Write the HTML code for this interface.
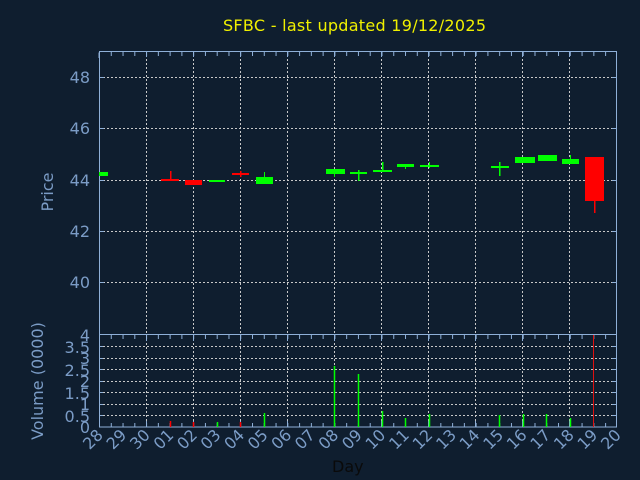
<!DOCTYPE html>
<html><head><meta charset="utf-8"><style>
html,body{margin:0;padding:0;background:#0f1e2f;}
svg{display:block}
text{font-family:"DejaVu Sans","Liberation Sans",sans-serif;}
</style></head><body>
<svg width="640" height="480" viewBox="0 0 640 480" xmlns="http://www.w3.org/2000/svg">
<rect width="640" height="480" fill="#0f1e2f"/>
<text x="223" y="31" font-size="16" fill="#f0f000" textLength="263">SFBC - last updated 19/12/2025</text>
<!-- grid -->
<g stroke="#c8c8c8" stroke-width="1" stroke-dasharray="2 2" fill="none">
<path d="M99 77.5H617M99 128.5H617M99 180.5H617M99 231.5H617M99 282.5H617"/>
<path d="M99 346.5H617M99 358.5H617M99 369.5H617M99 381.5H617M99 392.5H617M99 404.5H617M99 415.5H617"/>
<path d="M146.5 51V427M193.5 51V427M240.5 51V427M287.5 51V427M334.5 51V427M381.5 51V427M428.5 51V427M475.5 51V427M522.5 51V427M569.5 51V427"/>
</g>
<!-- axes -->
<g stroke="#8fb0d8" stroke-width="1" fill="none">
<rect x="99.5" y="51.5" width="517" height="375.5"/>
<path d="M99 334.5H617"/>
<path d="M99.5 52V55" stroke-dasharray="1 10.75"/>
<path d="M99 52.5V58M146.5 52V57M193.5 52V57M240.5 52V57M287.5 52V57M334.5 52V57M381.5 52V57M428.5 52V57M475.5 52V57M522.5 52V57M569.5 52V57"/>
<path d="M99 54H617" stroke-width="4" stroke-dasharray="1 10.77"/>
<path d="M99 337H617" stroke-width="4" stroke-dasharray="1 10.77"/>
<path d="M99 425H617" stroke-width="4" stroke-dasharray="1 10.77"/>
<path d="M146.5 335V341M193.5 335V341M240.5 335V341M287.5 335V341M334.5 335V341M381.5 335V341M428.5 335V341M475.5 335V341M522.5 335V341M569.5 335V341"/>
<path d="M146.5 421V427M193.5 421V427M240.5 421V427M287.5 421V427M334.5 421V427M381.5 421V427M428.5 421V427M475.5 421V427M522.5 421V427M569.5 421V427"/>
<path d="M99 77.5H104M99 128.5H104M99 180.5H104M99 231.5H104M99 282.5H104M612 77.5H617M612 128.5H617M612 180.5H617M612 231.5H617M612 282.5H617"/>
<path d="M612 346.5H617M612 358.5H617M612 369.5H617M612 381.5H617M612 392.5H617M612 404.5H617M612 415.5H617M99 346.5H103M99 358.5H103M99 369.5H103M99 381.5H103M99 392.5H103M99 404.5H103M99 415.5H103"/>
</g>
<!-- y labels -->
<g font-size="16" fill="#7b9cc6" text-anchor="end">
<text x="90" y="83">48</text><text x="90" y="134">46</text><text x="90" y="186">44</text><text x="90" y="237">42</text><text x="90" y="288">40</text>
<text x="90" y="341">4</text><text x="90" y="353">3.5</text><text x="90" y="364">3</text><text x="90" y="376">2.5</text><text x="90" y="387">2</text><text x="90" y="399">1.5</text><text x="90" y="410">1</text><text x="90" y="422">0.5</text><text x="90" y="433">0</text>
</g>
<text transform="translate(53,192) rotate(-90)" text-anchor="middle" font-size="16" fill="#7b9cc6">Price</text>
<text transform="translate(43,381) rotate(-90)" text-anchor="middle" font-size="16" fill="#7b9cc6">Volume (0000)</text>
<text x="332" y="472" font-size="16" fill="#0a0a0a">Day</text>
<!-- x labels -->
<g font-size="16" fill="#7b9cc6" text-anchor="end">
<text transform="translate(104,436) rotate(-45)">28</text>
<text transform="translate(127.5,436) rotate(-45)">29</text>
<text transform="translate(151,436) rotate(-45)">30</text>
<text transform="translate(174.6,436) rotate(-45)">01</text>
<text transform="translate(198.2,436) rotate(-45)">02</text>
<text transform="translate(221.7,436) rotate(-45)">03</text>
<text transform="translate(245.3,436) rotate(-45)">04</text>
<text transform="translate(268.8,436) rotate(-45)">05</text>
<text transform="translate(292.4,436) rotate(-45)">06</text>
<text transform="translate(315.9,436) rotate(-45)">07</text>
<text transform="translate(339.5,436) rotate(-45)">08</text>
<text transform="translate(363,436) rotate(-45)">09</text>
<text transform="translate(386.5,436) rotate(-45)">10</text>
<text transform="translate(410.1,436) rotate(-45)">11</text>
<text transform="translate(433.6,436) rotate(-45)">12</text>
<text transform="translate(457.2,436) rotate(-45)">13</text>
<text transform="translate(480.7,436) rotate(-45)">14</text>
<text transform="translate(504.3,436) rotate(-45)">15</text>
<text transform="translate(527.8,436) rotate(-45)">16</text>
<text transform="translate(551.4,436) rotate(-45)">17</text>
<text transform="translate(574.9,436) rotate(-45)">18</text>
<text transform="translate(598.5,436) rotate(-45)">19</text>
<text transform="translate(622,436) rotate(-45)">20</text>
</g>
<!-- candles -->
<g fill="#00ff00" stroke="none">
<rect x="99" y="172" width="9" height="4"/>
<rect x="209" y="180" width="16" height="2"/>
<rect x="256" y="177" width="17" height="7"/><rect x="264" y="172" width="1" height="5"/>
<rect x="326" y="169" width="19" height="5"/><rect x="334" y="174" width="1" height="3"/>
<rect x="350" y="172" width="17" height="2"/><rect x="358" y="170" width="1.5" height="11"/>
<rect x="373" y="170" width="19" height="2"/><rect x="382" y="162" width="1.5" height="8"/>
<rect x="397" y="164" width="17" height="3"/><rect x="405" y="167" width="1" height="2"/>
<rect x="420" y="165" width="19" height="2"/><rect x="429" y="162" width="1" height="6"/>
<rect x="491" y="166" width="18" height="2"/><rect x="499" y="162" width="1.5" height="14"/>
<rect x="515" y="157" width="20" height="6"/>
<rect x="538" y="155" width="19" height="6"/>
<rect x="562" y="159" width="17" height="5"/><rect x="570" y="155" width="1" height="4"/>
</g>
<g fill="#ff0000" stroke="none">
<rect x="161" y="179" width="18" height="2"/><rect x="170" y="171" width="1.5" height="9"/>
<rect x="185" y="180" width="17" height="5"/>
<rect x="232" y="173" width="17" height="2"/><rect x="240" y="171" width="1.5" height="6"/>
<rect x="585" y="157" width="19" height="44"/><rect x="594" y="201" width="1.5" height="12"/>
</g>
<!-- volume -->
<g stroke-width="1.5">
<path stroke="#ff0000" d="M170.5 421V427M193.5 422V427M240.5 422V427"/>
<path stroke="#00ff00" d="M217.5 422V427M264.5 413V427M334.5 366V427M358.5 374V427M382.5 411V427M405.5 418V427M429.5 414V427M499.5 415V427M523.5 414V427M546.5 414V427M570.5 418V427"/>
<path stroke="#dd1111" stroke-width="1" d="M593.5 335V427"/>
</g>
</svg>
</body></html>
